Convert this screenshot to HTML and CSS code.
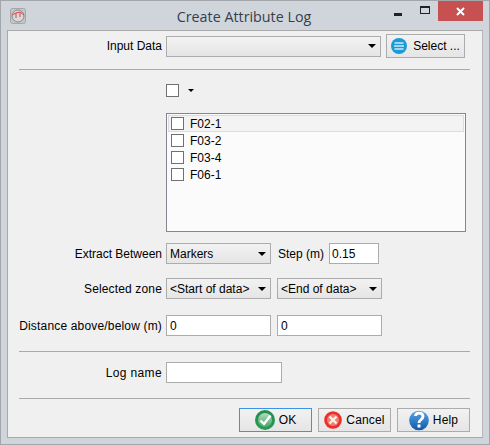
FILE: index.html
```html
<!DOCTYPE html>
<html lang="en">
<head>
    <meta charset="UTF-8">
    <title>Create Attribute Log</title>
    <link rel="stylesheet" href="styles.css">
</head>
<body>

    <div class="window">
        <!-- Title bar -->
        <div class="titlebar">
            <svg class="app-icon" width="16" height="16" viewBox="0 0 16 16">
                <rect x="0.5" y="0.5" width="15" height="15" rx="2" fill="#c4c6c8" stroke="#a4a6a8"/>
                <circle cx="8" cy="8" r="6" fill="#d8d8d8" stroke="#8a8a8a"/>
                <path d="M2 7 L6 5 L10 4 L14 7 M6 5 V10 M10 4.5 V9" fill="none" stroke="#e2404a" stroke-width="1"/>
            </svg>
            <div class="title">Create Attribute Log</div>
            <div class="win-controls">
                <div class="win-btn"><span class="min-glyph"></span></div>
                <div class="win-btn"><span class="max-glyph"></span></div>
                <div class="win-close">
                    <svg width="9" height="9" viewBox="0 0 9 9"><path d="M1 1 L8 8 M8 1 L1 8" stroke="#fff" stroke-width="2"/></svg>
                </div>
            </div>
        </div>

        <div class="content">
            <div class="row row-input">
                <label class="label">Input Data</label>
                <div class="combo combo-input"><span></span><i class="arrow"></i></div>
                <button class="btn btn-select">
                    <svg width="16" height="16" viewBox="0 0 16 16">
                        <circle cx="8" cy="8" r="8" fill="#1a9ad6"/>
                        <path d="M3.5 5 H12.5 M3 8 H13 M3.5 11 H12.5" stroke="#cdeaf7" stroke-width="1.7"/>
                    </svg>
                    Select ...
                </button>
            </div>
            <hr class="sep sep-first">

            <div class="row row-check">
                <span class="check"></span>
                <i class="arrow arrow-small"></i>
            </div>

            <div class="row row-list">
                <div class="list">
                    <div class="list-item active"><span class="check"></span>F02-1</div>
                    <div class="list-item"><span class="check"></span>F03-2</div>
                    <div class="list-item"><span class="check"></span>F03-4</div>
                    <div class="list-item"><span class="check"></span>F06-1</div>
                </div>
            </div>

            <div class="row row-extract">
                <label class="label">Extract Between</label>
                <div class="combo combo-wide"><span>Markers</span><i class="arrow"></i></div>
                <label class="step-label">Step (m)</label>
                <input class="field field-step" type="text" value="0.15">
            </div>

            <div class="row row-zone">
                <label class="label">Selected zone</label>
                <div class="combo combo-wide"><span>&lt;Start of data&gt;</span><i class="arrow"></i></div>
                <div class="combo combo-wide"><span>&lt;End of data&gt;</span><i class="arrow"></i></div>
            </div>

            <div class="row row-distance">
                <label class="label">Distance above/below (m)</label>
                <input class="field field-wide" type="text" value="0">
                <input class="field field-wide" type="text" value="0">
            </div>
            <hr class="sep sep-second">

            <div class="row row-name">
                <label class="label">Log name</label>
                <input class="field field-name" type="text">
            </div>
            <hr class="sep sep-third">

            <!-- Dialog buttons -->
            <div class="actions">
                <button class="btn btn-action btn-default">
                    <svg width="20" height="20" viewBox="0 0 20 20">
                        <defs><linearGradient id="okFill" x1="0" y1="0" x2="0" y2="1"><stop offset="0" stop-color="#1f8f4c"/><stop offset="1" stop-color="#2a9a55"/></linearGradient><linearGradient id="okInner" x1="0" y1="0" x2="0" y2="1"><stop offset="0" stop-color="#b5d9c0"/><stop offset="1" stop-color="#4aa86c"/></linearGradient></defs>
                        <circle cx="10" cy="10" r="10" fill="url(#okFill)"/>
                        <circle cx="10" cy="10" r="7" fill="url(#okInner)"/>
                        <path d="M5.5 10.5 L9 14 L15.5 5.5" fill="none" stroke="#fff" stroke-width="2.4"/>
                    </svg>
                    OK
                </button>
                <button class="btn btn-action">
                    <svg width="18" height="18" viewBox="0 0 18 18">
                        <circle cx="9" cy="9" r="8.8" fill="#ec2f2a"/>
                        <circle cx="9" cy="9" r="6" fill="#f17f72"/>
                        <path d="M5.5 5.5 L12.5 12.5 M12.5 5.5 L5.5 12.5" stroke="#fdeee8" stroke-width="2.4"/>
                    </svg>
                    Cancel
                </button>
                <button class="btn btn-action">
                    <svg width="20" height="22" viewBox="0 0 20 22">
                        <defs><linearGradient id="helpFill" x1="0" y1="0" x2="0" y2="1"><stop offset="0" stop-color="#5aa5ea"/><stop offset="1" stop-color="#0f57a8"/></linearGradient></defs>
                        <circle cx="10" cy="11.5" r="9.8" fill="url(#helpFill)"/>
                        <path d="M6.5 7 C6.5 3 14 3 14 7.5 C14 10.5 10 10.5 10 14" fill="none" stroke="#fff" stroke-width="2.8"/>
                        <rect x="8.5" y="15.5" width="3" height="3" fill="#fff"/>
                    </svg>
                    Help
                </button>
            </div>
        </div>
    </div>

</body>
</html>
```

FILE: styles.css
```css
* {
    box-sizing: border-box;
    margin: 0;
    padding: 0;
}

body {
    font-family: 'Liberation Sans', Arial, sans-serif;
    font-size: 12px;
    color: #000;
    background-color: #d0d5dc;
    width: 490px;
    height: 445px;
    overflow: hidden;
}

.window {
    width: 490px;
    height: 445px;
    display: flex;
    flex-direction: column;
    border: 1px solid #a3a6aa;
    background-color: #d0d5dc;
}

.titlebar {
    height: 29px;
    display: flex;
    align-items: flex-start;
    position: relative;
    flex: none;
}

.app-icon {
    margin: 7px 0 0 9px;
}

.title {
    position: absolute;
    left: 0;
    right: 2px;
    top: 6px;
    text-align: center;
    font-family: 'Open Sans', sans-serif;
    font-size: 14.3px;
    line-height: 19px;
    color: #36404d;
}

.win-controls {
    margin-left: auto;
    margin-right: 6px;
    display: flex;
    position: relative;
}

.win-btn {
    width: 27px;
    height: 20px;
    display: flex;
    align-items: center;
    justify-content: center;
}

.min-glyph {
    width: 8px;
    height: 3px;
    margin-top: 7px;
    background-color: #1f2225;
}

.max-glyph {
    width: 10px;
    height: 8px;
    margin-top: -3px;
    border: 1px solid #1f2225;
    border-top-width: 2px;
}

.win-close {
    width: 45px;
    height: 20px;
    background-color: #c75050;
    display: flex;
    align-items: center;
    justify-content: center;
}

.content {
    flex: 1;
    margin: 0 6px 6px 6px;
    padding: 0 12px 0 11px;
    background-color: #f0f0f0;
    border: 1px solid #a9a9a9;
    border-right-color: #b4b7bb;
}

.row {
    display: flex;
    align-items: center;
    padding-left: 147px;
    position: relative;
}

.label {
    position: absolute;
    right: calc(100% - 143px);
    white-space: nowrap;
}

.row-input {
    height: 24px;
    margin-top: 3px;
    gap: 5px;
}

.row-check {
    margin-top: 14px;
    height: 13px;
    gap: 9px;
}

.row-list {
    margin-top: 16px;
}

.row-extract {
    margin-top: 11px;
    height: 21px;
}

.row-zone {
    margin-top: 14px;
    height: 21px;
    gap: 6px;
}

.row-zone .label {
    letter-spacing: 0.15px;
}

.row-distance {
    margin-top: 16px;
    height: 21px;
    gap: 6px;
}

.row-distance .label {
    letter-spacing: 0.17px;
}

.row-name {
    margin-top: 10px;
    height: 21px;
}

.row-name .label {
    letter-spacing: 0.35px;
}

.sep {
    border: none;
    height: 1px;
    background-color: #a9a9a9;
    width: 451px;
}

.sep-first {
    margin-top: 11px;
}

.sep-second {
    margin-top: 15px;
}

.sep-third {
    margin-top: 15px;
}

.combo {
    height: 21px;
    display: flex;
    align-items: center;
    justify-content: space-between;
    padding: 0 4px 0 3px;
    border: 1px solid #acacac;
    background: linear-gradient(#f2f2f2, #e5e5e5);
    white-space: nowrap;
}

.combo-input {
    width: 215px;
}

.combo-wide {
    width: 105px;
}

.arrow {
    width: 0;
    height: 0;
    border-left: 4px solid transparent;
    border-right: 4px solid transparent;
    border-top: 4px solid #000;
}

.arrow-small {
    border-left-width: 3px;
    border-right-width: 3px;
    border-top-width: 3px;
}

.check {
    display: block;
    width: 13px;
    height: 13px;
    flex: none;
    background-color: #fff;
    border: 1px solid #707070;
}

.list {
    width: 300px;
    height: 119px;
    padding: 1px;
    background-color: #fbfbfb;
    border: 1px solid #828790;
}

.list-item {
    height: 17px;
    display: flex;
    align-items: center;
    gap: 6px;
    padding-left: 2px;
    border: 1px solid transparent;
}

.list-item.active {
    background-color: #f3f3f3;
    border-color: #dcdcdc;
}

.field {
    height: 21px;
    padding: 0 3px;
    border: 1px solid #acacac;
    background-color: #fff;
    font-family: inherit;
    font-size: 12px;
    color: #000;
}

.field-step {
    width: 50px;
    padding: 0 2px;
}

.field-wide {
    width: 105px;
}

.field-name {
    width: 116px;
}

.step-label {
    margin: 0 4px 0 7px;
    width: 47px;
    white-space: nowrap;
}

.btn {
    display: flex;
    align-items: center;
    justify-content: center;
    gap: 4px;
    border: 1px solid #acacac;
    background: linear-gradient(#f2f2f2, #e5e5e5);
    font-family: inherit;
    font-size: 12px;
    color: #000;
}

.btn-select {
    width: 79px;
    height: 24px;
    gap: 6px;
}

.actions {
    display: flex;
    justify-content: flex-end;
    gap: 6px;
    margin-top: 9px;
}

.btn-action {
    width: 73px;
    height: 24px;
    letter-spacing: 0.15px;
}

.btn-default {
    border-color: #3c93e8;
}
```
